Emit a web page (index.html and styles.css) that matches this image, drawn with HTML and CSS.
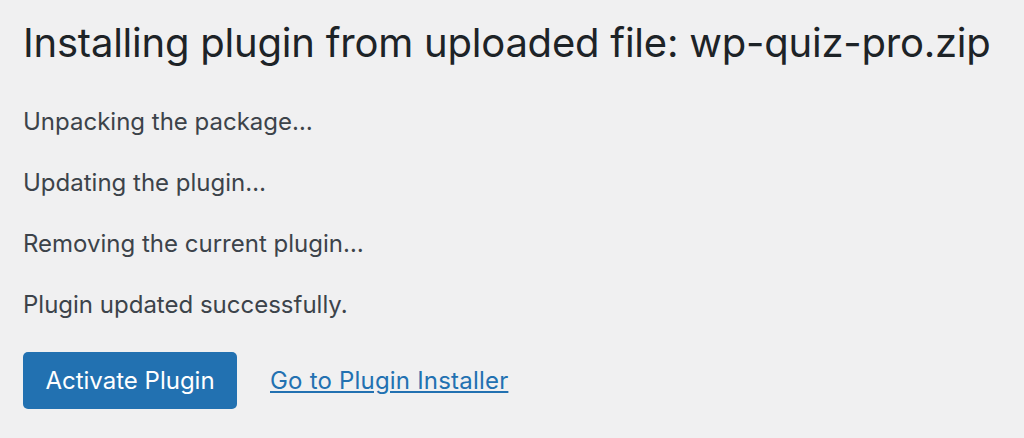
FILE: index.html
```html
<!DOCTYPE html>
<html>
<head>
    <meta charset="utf-8" />
    <title>Installing plugin</title>
    <meta name="viewport" content="width=device-width, initial-scale=1">
    <link rel="stylesheet" href="styles.css">
</head>
<body>
    <div class="wrap">
        <h1>Installing plugin from uploaded file: wp-quiz-pro.zip</h1>
        <p>Unpacking the package&hellip;</p>
        <p>Updating the plugin&hellip;</p>
        <p>Removing the current plugin&hellip;</p>
        <p>Plugin updated successfully.</p>
        <div class="actions">
            <a class="button" href="#">Activate Plugin</a>
            <a class="link" href="#">Go to Plugin Installer</a>
        </div>
    </div>
</body>
</html>
```

FILE: styles.css
```css
body,h1,p{
    margin: 0;
}
body{
    background: #f0f0f1;
    font-family: Inter, "Noto Sans", sans-serif;
    color: #3c434a;
}
.wrap{
    padding: 18px 24px 0 23px;
}
.wrap h1{
    font-size: 40px;
    font-weight: 400;
    line-height: 50px;
    letter-spacing: -0.22px;
    white-space: nowrap;
    color: #1d2327;
    margin-bottom: 37px;
}
.wrap p{
    font-size: 24px;
    line-height: 34px;
    margin-bottom: 27px;
}
.wrap p:last-of-type{
    margin-bottom: 30px;
}
.actions{
    display: flex;
    align-items: center;
    gap: 33px;
}
.button{
    display: block;
    box-sizing: border-box;
    width: 214px;
    height: 57px;
    line-height: 57px;
    text-align: center;
    font-size: 24px;
    color: #fff;
    text-decoration: none;
    background: #2271b1;
    border-radius: 5px;
}
.link{
    font-size: 24px;
    letter-spacing: 0.2px;
    color: #2271b1;
}
```
